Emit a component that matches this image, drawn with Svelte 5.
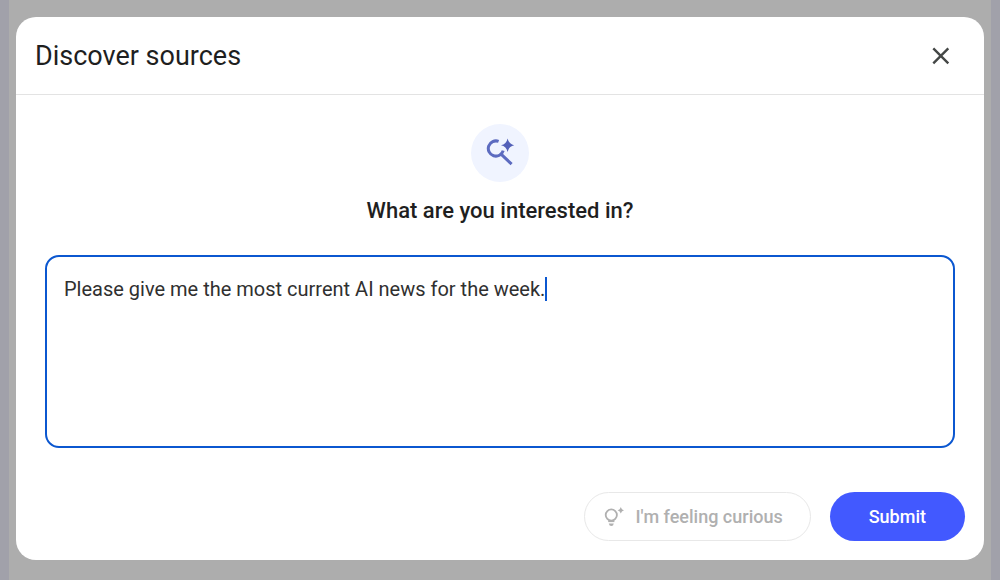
<script lang="ts">
	import { onMount } from 'svelte';

	let query = $state('Please give me the most current AI news for the week.');
	let field: HTMLTextAreaElement;
	let caretLeft = $state(0);

	/**
	 * Places the caret after the last character of the query.
	 */
	function placeCaret() {
		const style = getComputedStyle(field);
		const ctx = document.createElement('canvas').getContext('2d');
		if (!ctx) return;
		ctx.font = `${style.fontWeight} ${style.fontSize} ${style.fontFamily}`;
		const indent = parseFloat(style.paddingLeft) + parseFloat(style.borderLeftWidth);
		caretLeft = Math.round(indent + ctx.measureText(query).width);
	}

	onMount(placeCaret);
</script>

<div class="backdrop">
	<div class="dialog" role="dialog" aria-modal="true" aria-labelledby="dialog-title">
		<header class="dialog-header">
			<h1 id="dialog-title">Discover sources</h1>
			<button class="close" type="button" aria-label="Close">
				<svg viewBox="0 0 18 18" width="18" height="18" aria-hidden="true">
					<path d="M1.3 1.3 16.3 16.3M16.3 1.3 1.3 16.3" />
				</svg>
			</button>
		</header>

		<form class="dialog-body" onsubmit={(e) => e.preventDefault()}>
			<div class="badge">
				<svg viewBox="0 0 28 28" width="28" height="28" aria-hidden="true">
					<path class="lens" d="M12.6 2.4A7.6 7.6 0 1 0 17.2 11.6M14.8 14.8 25.6 25.2" />
					<path class="spark" d="M21.6 -0.6Q22.8 5.1 28.2 6.2 22.8 7.3 21.6 13 20.4 7.3 15 6.2 20.4 5.1 21.6 -0.6Z" />
				</svg>
			</div>

			<label for="query">What are you interested in?</label>

			<div class="field">
				<textarea id="query" bind:this={field} bind:value={query} oninput={placeCaret}></textarea>
				<span class="caret" style="left: {caretLeft}px"></span>
			</div>

			<div class="actions">
				<button class="curious" type="button" disabled>
					<svg viewBox="0 0 20 20" width="20" height="20" aria-hidden="true">
						<circle cx="7.3" cy="8" r="5.6" />
						<path class="base" d="M4.2 14.2H10.4" />
						<path class="fill" d="M4.8 16.4H9.8Q9.4 19 7.3 19 5.2 19 4.8 16.4Z" />
						<path class="fill" d="M16.8 0Q17.4 2.7 20 3.3 17.4 3.9 16.8 6.6 16.2 3.9 13.6 3.3 16.2 2.7 16.8 0Z" />
					</svg>
					I'm feeling curious
				</button>
				<button class="submit" type="submit">Submit</button>
			</div>
		</form>
	</div>
</div>

<style>
	:global(body) {
		margin: 0;
		background: #adadad;
	}

	.backdrop {
		box-sizing: border-box;
		min-height: 100vh;
		padding: 17px 7px 20px;
		border: solid #a1a1aa;
		border-width: 0 9px;
		font-family: Roboto, 'Liberation Sans', sans-serif;
		color: #1f1f1f;
	}

	.dialog {
		background: #fff;
		border-radius: 20px;
	}

	.dialog-header {
		display: flex;
		justify-content: space-between;
		align-items: center;
		height: 77px;
		padding: 0 28px 0 19px;
		border-bottom: 1px solid #e3e3e3;
	}

	h1 {
		margin: 0;
		font-size: 27px;
		line-height: 36px;
		font-weight: 400;
	}

	button {
		font-family: inherit;
		border: 0;
	}

	.close {
		display: flex;
		padding: 6px;
		background: none;
	}

	.close path {
		fill: none;
		stroke: #444746;
		stroke-width: 2.4;
	}

	.dialog-body {
		display: flex;
		flex-direction: column;
		align-items: center;
		padding: 29px 19px 19px;
	}

	.badge {
		display: flex;
		align-items: center;
		justify-content: center;
		width: 58px;
		height: 58px;
		border-radius: 50%;
		background: #f0f4ff;
	}

	.badge svg {
		overflow: visible;
	}

	.lens {
		fill: none;
		stroke: #5c6bc0;
		stroke-width: 3;
	}

	.spark {
		fill: #5360b8;
	}

	label {
		margin: 14px 0 29px;
		font-size: 22px;
		line-height: 30px;
		font-weight: 500;
	}

	.field {
		position: relative;
		align-self: stretch;
		margin: 0 10px;
	}

	textarea {
		display: block;
		box-sizing: border-box;
		width: 100%;
		height: 193px;
		padding: 18px 17px;
		border: 2px solid #0b57d0;
		border-radius: 14px;
		outline: none;
		resize: none;
		background: #fff;
		caret-color: transparent;
		color: #303030;
		font-family: inherit;
		font-size: 20px;
		line-height: 28px;
	}

	.caret {
		position: absolute;
		top: 22px;
		width: 2px;
		height: 24px;
		background: #0b57d0;
	}

	.actions {
		display: flex;
		align-self: stretch;
		justify-content: flex-end;
		gap: 19px;
		margin-top: 44px;
	}

	.actions button {
		display: flex;
		align-items: center;
		justify-content: center;
		height: 49px;
		border-radius: 25px;
		font-size: 18px;
		font-weight: 500;
	}

	.curious {
		gap: 11px;
		padding: 0 27px 0 19px;
		border: 1px solid #e8e8e8;
		background: #fff;
		color: #b0b0b0;
	}

	.curious circle,
	.curious .base {
		fill: none;
		stroke: #b0b0b0;
		stroke-width: 1.8;
	}

	.curious .fill {
		fill: #b0b0b0;
	}

	.submit {
		padding: 0 39px;
		background: #4259ff;
		color: #fff;
	}
</style>
